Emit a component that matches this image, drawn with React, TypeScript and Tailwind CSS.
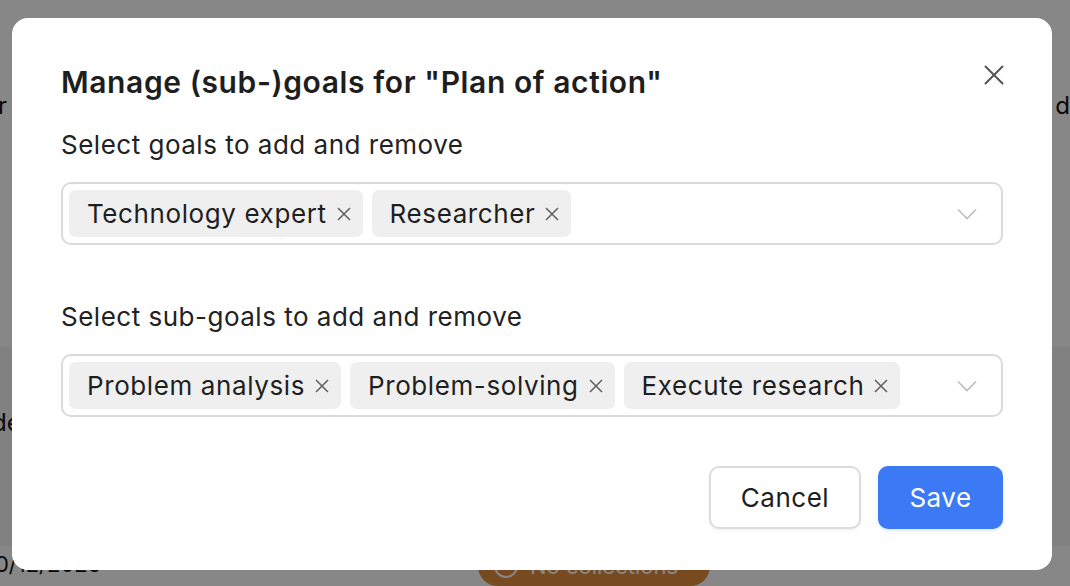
import { X } from 'lucide-react';

const goals = ['Technology expert', 'Researcher'];
const subGoals = ['Problem analysis', 'Problem-solving', 'Execute research'];

function Chevron() {
  return (
    <svg width="20" height="12" viewBox="0 0 20 12" fill="none" className="shrink-0">
      <path d="M1 1.5 L10 10.5 L19 1.5" stroke="#bdbdbd" strokeWidth="1.6" />
    </svg>
  );
}

function ChipRemove() {
  return (
    <svg width="16" height="16" viewBox="0 0 16 16" fill="none" className="shrink-0">
      <path d="M2 2 L14 14 M14 2 L2 14" stroke="#5f5f5f" strokeWidth="1.5" />
    </svg>
  );
}

function MultiSelect({ items }: { items: string[] }) {
  return (
    <div className="flex h-[63px] items-center rounded-[10px] border-2 border-[#dadada] pl-[6px] pr-6">
      <div className="flex flex-1 items-center gap-[9px]">
        {items.map((item) => (
          <span
            key={item}
            className="flex h-[47px] items-center gap-[9px] rounded-[7px] bg-[#efefef] pl-[18px] pr-[11px] text-[26px] tracking-[0.6px] text-[#1f1f1f]"
          >
            {item}
            <ChipRemove />
          </span>
        ))}
      </div>
      <Chevron />
    </div>
  );
}

export default function App() {
  return (
    <div className="relative h-[586px] w-[1070px] overflow-hidden bg-white font-['Inter',sans-serif]">
      {/* page behind the dialog */}
      <div className="flex h-full flex-col text-[24px] text-[#111]">
        <div className="flex h-[363px] justify-between pt-[88px]">
          <span className="-ml-[2px]">r</span>
          <span className="-mr-[14px]">de</span>
        </div>
        <div className="h-[207px] bg-[#f4f4f4] pt-[58px]">
          <span className="-ml-[8px]">de</span>
        </div>
        <div className="flex items-start">
          <span className="-ml-[14px] mt-[2px] w-[492px] text-[22px]">10/12/2025</span>
          <span className="flex h-[40px] w-[232px] items-center gap-3 rounded-full bg-[#e38c3d] px-4 text-[22px] text-white">
            <span className="size-6 rounded-full border-2 border-white" />
            No collections
          </span>
        </div>
      </div>

      {/* overlay */}
      <div className="absolute inset-0 bg-black/[0.47]" />

      {/* dialog */}
      <div className="absolute left-[12px] top-[18px] flex h-[552px] w-[1040px] flex-col rounded-[16px] bg-white px-[49px] pt-[46px]">
        <div className="flex items-start justify-between">
          <h2 className="text-[30px] leading-[36px] font-semibold tracking-[0.6px] text-[#1e1e1e]">
            Manage (sub-)goals for "Plan of action"
          </h2>
          <X className="-mr-[8px] -mt-[6px] size-[34px] text-[#555]" strokeWidth={1.4} />
        </div>

        <p className="mt-[29px] text-[26px] leading-[32px] tracking-[0.5px] text-[#222]">Select goals to add and remove</p>
        <div className="mt-[21px]">
          <MultiSelect items={goals} />
        </div>

        <p className="mt-[56px] text-[26px] leading-[32px] tracking-[0.5px] text-[#222]">Select sub-goals to add and remove</p>
        <div className="mt-[21px]">
          <MultiSelect items={subGoals} />
        </div>

        <div className="mt-[49px] flex justify-end gap-[17px]">
          <button className="h-[63px] w-[152px] rounded-[10px] border-2 border-[#dcdcdc] bg-white text-[26px] tracking-[0.5px] text-[#1e1e1e] shadow-[0_2px_3px_rgba(0,0,0,0.05)]">
            Cancel
          </button>
          <button className="h-[63px] w-[125px] rounded-[10px] bg-[#3b79f5] text-[26px] tracking-[0.5px] text-white shadow-[0_2px_3px_rgba(59,121,245,0.15)]">
            Save
          </button>
        </div>
      </div>
    </div>
  );
}
